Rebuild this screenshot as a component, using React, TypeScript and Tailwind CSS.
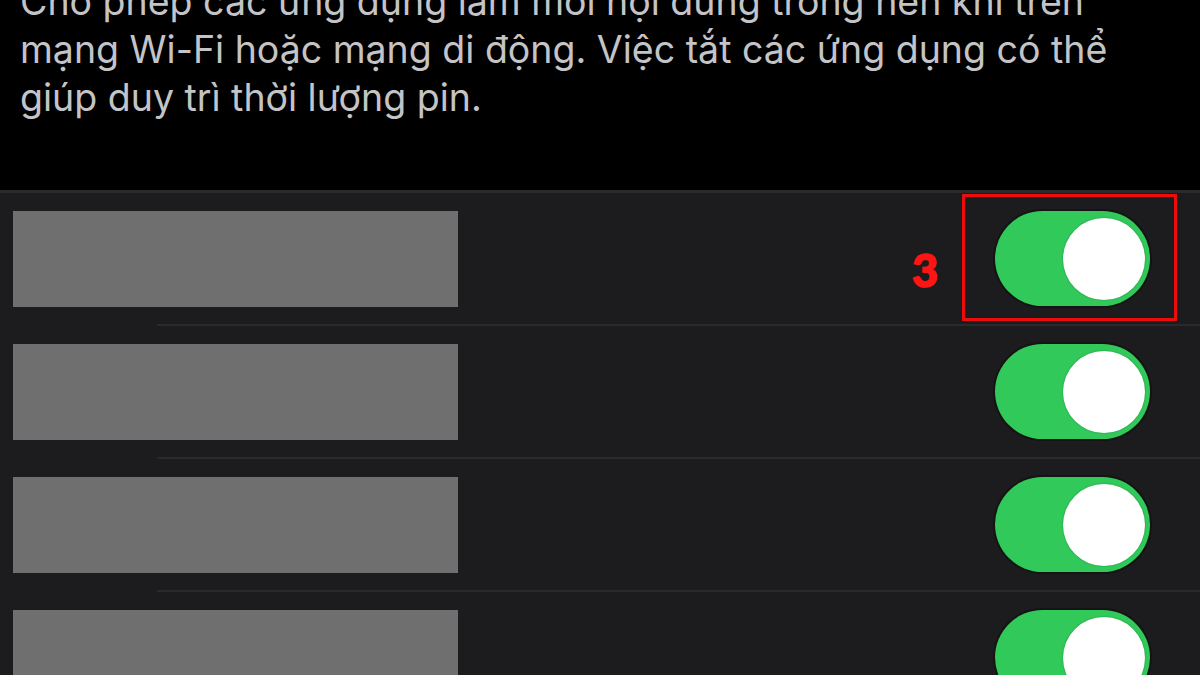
import React from 'react';

type RowProps = {
  last?: boolean;
};

const Toggle: React.FC = () => (
  <div className="relative flex h-[95px] w-[155px] items-center justify-end rounded-full bg-[#31c95a] pr-[5px] shadow-[0_0_0_2px_#141414]">
    <div className="h-[82px] w-[82px] rounded-full bg-white shadow-[0_0_2px_rgba(0,0,0,0.3)]" />
  </div>
);

const Row: React.FC<RowProps> = ({ last }) => (
  <div>
    <div className="flex h-[131px] items-center justify-between pl-[13px] pr-[50px]">
      <div className="h-[96px] w-[445px] bg-[#6f6f6f]" />
      <Toggle />
    </div>
    {!last && <div className="ml-[157px] h-[2px] bg-[#2a2a2c]" />}
  </div>
);

export default function App() {
  return (
    <div
      className="relative h-[675px] w-[1200px] overflow-hidden bg-black"
      style={{ fontFamily: 'Inter, Roboto, "Noto Sans", sans-serif' }}
    >
      {/* mô tả */}
      <div className="h-[190px] overflow-hidden bg-black">
        <p className="mt-[-22px] whitespace-nowrap pl-[20px] text-[37.5px] leading-[48px] text-[#c4c4c6]">
          Cho phép các ứng dụng làm mới nội dung trong nền khi trên
          <br />
          mạng Wi-Fi hoặc mạng di động. Việc tắt các ứng dụng có thể
          <br />
          giúp duy trì thời lượng pin.
        </p>
      </div>

      {/* danh sách ứng dụng */}
      <div className="border-t-[3px] border-[#2a2a2c] bg-[#1c1c1e]">
        <Row />
        <Row />
        <Row />
        <Row last />
      </div>

      {/* chú thích bước 3 */}
      <div className="absolute left-[962px] top-[194px] h-[127px] w-[215px] border-[3px] border-[#ee0b0b]" />
      <span
        className="absolute left-[912px] top-[248px] text-[45px] font-black leading-none text-[#ff1414] [-webkit-text-stroke:1.5px_#ff1414]"
        style={{ fontFamily: 'Lato, "Open Sans", Roboto, sans-serif' }}
      >
        3
      </span>
    </div>
  );
}
